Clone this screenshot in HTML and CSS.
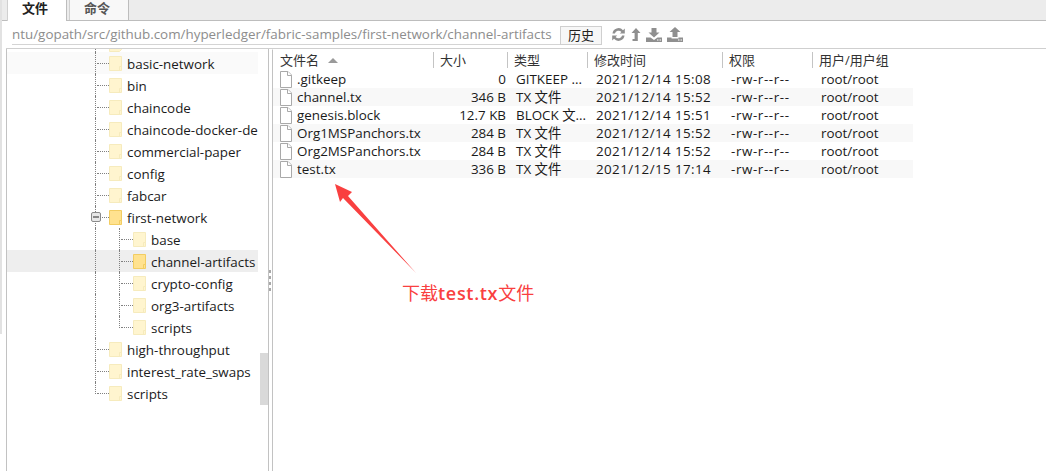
FILE: index.html
```html
<!DOCTYPE html>
<html lang="zh">
<head>
<meta charset="utf-8">
<title>文件</title>
<link rel="stylesheet" href="styles.css">
</head>
<body>
<div class="tabs">
  <div class="tab active">文件</div>
  <div class="tab">命令</div>
</div>
<div class="pathbar">
  <div class="path">ntu/gopath/src/github.com/hyperledger/fabric-samples/first-network/channel-artifacts</div>
  <button class="hist">历史</button>
  <div class="tools">
    <svg class="ico" width="15" height="15" viewBox="0 0 15 15"><path d="M1.5 6.5A6 6 0 0 1 12 3.2L13.8 1.5V6.5H8.8L10.4 4.9A3.8 3.8 0 0 0 3.9 6.5ZM13.5 8.5A6 6 0 0 1 3 11.8L1.2 13.5V8.5H6.2L4.6 10.1A3.8 3.8 0 0 0 11.1 8.5Z"/></svg>
    <svg class="ico" width="10" height="15" viewBox="0 0 10 15"><path d="M5 1L9.5 6H6.8V14H1.5V12H3.6V6H.5Z"/></svg>
    <svg class="ico" width="16" height="15" viewBox="0 0 16 15"><path d="M5.5 1H10.500V5.500H13.500L8 10.500 2.500 5.500H5.500ZM0 10.500H4.500L8 13 11.500 10.500H16V15H0ZM11 12.500V13.500H12.500V12.500ZM13.500 12.500V13.500H15V12.500Z"/></svg>
    <svg class="ico" width="16" height="15" viewBox="0 0 16 15"><path d="M8 0L13.500 5H10.500V10H5.500V5H2.500ZM0 10.500H4.500V11.500H11.500V10.500H16V15H0ZM11 12.500V13.500H12.500V12.500ZM13.500 12.500V13.500H15V12.500Z"/></svg>
  </div>
</div>
<div class="main">
  <div class="tree">
    <div class="tree-list">
      <div class="row clip"><span class="guide"></span><svg class="folder" width="13" height="15" viewBox="0 0 13 15"><path d="M.5.5H12.500V12.500L10.500 14.500H.5Z"/></svg></div>
      <div class="row hover"><span class="guide"></span><svg class="folder" width="13" height="15" viewBox="0 0 13 15"><path d="M.5.5H12.500V14.500H.5Z"/><path d="M10.500 14.500V10.500H12.500"/></svg><span class="name">basic-network</span></div>
      <div class="row"><span class="guide"></span><svg class="folder" width="13" height="15" viewBox="0 0 13 15"><path d="M.5.5H12.500V14.500H.5Z"/><path d="M10.500 14.500V10.500H12.500"/></svg><span class="name">bin</span></div>
      <div class="row"><span class="guide"></span><svg class="folder" width="13" height="15" viewBox="0 0 13 15"><path d="M.5.5H12.500V14.500H.5Z"/><path d="M10.500 14.500V10.500H12.500"/></svg><span class="name">chaincode</span></div>
      <div class="row"><span class="guide"></span><svg class="folder" width="13" height="15" viewBox="0 0 13 15"><path d="M.5.5H12.500V14.500H.5Z"/><path d="M10.500 14.500V10.500H12.500"/></svg><span class="name">chaincode-docker-de</span></div>
      <div class="row"><span class="guide"></span><svg class="folder" width="13" height="15" viewBox="0 0 13 15"><path d="M.5.5H12.500V14.500H.5Z"/><path d="M10.500 14.500V10.500H12.500"/></svg><span class="name">commercial-paper</span></div>
      <div class="row"><span class="guide"></span><svg class="folder" width="13" height="15" viewBox="0 0 13 15"><path d="M.5.5H12.500V14.500H.5Z"/><path d="M10.500 14.500V10.500H12.500"/></svg><span class="name">config</span></div>
      <div class="row"><span class="guide"></span><svg class="folder" width="13" height="15" viewBox="0 0 13 15"><path d="M.5.5H12.500V14.500H.5Z"/><path d="M10.500 14.500V10.500H12.500"/></svg><span class="name">fabcar</span></div>
      <div class="row"><span class="guide open"><span class="box"></span></span><svg class="folder on" width="13" height="15" viewBox="0 0 13 15"><path d="M.5.5H12.500V14.500H.5Z"/><path d="M10.500 14.500V10.500H12.500"/></svg><span class="name">first-network</span></div>
      <div class="row"><span class="pass"></span><span class="guide"></span><svg class="folder" width="13" height="15" viewBox="0 0 13 15"><path d="M.5.5H12.500V14.500H.5Z"/><path d="M10.500 14.500V10.500H12.500"/></svg><span class="name">base</span></div>
      <div class="row selected"><span class="pass"></span><span class="guide"></span><svg class="folder on" width="13" height="15" viewBox="0 0 13 15"><path d="M.5.5H12.500V14.500H.5Z"/><path d="M10.500 14.500V10.500H12.500"/></svg><span class="name">channel-artifacts</span></div>
      <div class="row"><span class="pass"></span><span class="guide"></span><svg class="folder" width="13" height="15" viewBox="0 0 13 15"><path d="M.5.5H12.500V14.500H.5Z"/><path d="M10.500 14.500V10.500H12.500"/></svg><span class="name">crypto-config</span></div>
      <div class="row"><span class="pass"></span><span class="guide"></span><svg class="folder" width="13" height="15" viewBox="0 0 13 15"><path d="M.5.5H12.500V14.500H.5Z"/><path d="M10.500 14.500V10.500H12.500"/></svg><span class="name">org3-artifacts</span></div>
      <div class="row"><span class="pass"></span><span class="guide end"></span><svg class="folder" width="13" height="15" viewBox="0 0 13 15"><path d="M.5.5H12.500V14.500H.5Z"/><path d="M10.500 14.500V10.500H12.500"/></svg><span class="name">scripts</span></div>
      <div class="row"><span class="guide"></span><svg class="folder" width="13" height="15" viewBox="0 0 13 15"><path d="M.5.5H12.500V14.500H.5Z"/><path d="M10.500 14.500V10.500H12.500"/></svg><span class="name">high-throughput</span></div>
      <div class="row"><span class="guide"></span><svg class="folder" width="13" height="15" viewBox="0 0 13 15"><path d="M.5.5H12.500V14.500H.5Z"/><path d="M10.500 14.500V10.500H12.500"/></svg><span class="name">interest_rate_swaps</span></div>
      <div class="row"><span class="guide end"></span><svg class="folder" width="13" height="15" viewBox="0 0 13 15"><path d="M.5.5H12.500V14.500H.5Z"/><path d="M10.500 14.500V10.500H12.500"/></svg><span class="name">scripts</span></div>
    </div>
    <div class="track"><div class="thumb"></div></div>
  </div>
  <div class="splitter"><i></i><i></i><i></i><i></i></div>
  <div class="files">
    <div class="thead">
      <div class="th first">文件名<span class="sort"></span></div>
      <div class="th">大小</div>
      <div class="th">类型</div>
      <div class="th">修改时间</div>
      <div class="th">权限</div>
      <div class="th">用户/用户组</div>
    </div>
    <div class="tr"><div class="c-name"><svg class="doc" width="12" height="17" viewBox="0 0 12 17"><path d="M.5.5H8L11.500 4V16.500H.5Z"/><path d="M7.500.5V4.500H11.500"/></svg>.gitkeep</div><div class="c-size">0</div><div class="c">GITKEEP ...</div><div class="c date">2021/12/14 15:08</div><div class="c perm">-rw-r--r--</div><div class="c">root/root</div></div>
    <div class="tr alt"><div class="c-name"><svg class="doc" width="12" height="17" viewBox="0 0 12 17"><path d="M.5.5H8L11.500 4V16.500H.5Z"/><path d="M7.500.5V4.500H11.500"/></svg>channel.tx</div><div class="c-size">346 B</div><div class="c">TX 文件</div><div class="c date">2021/12/14 15:52</div><div class="c perm">-rw-r--r--</div><div class="c">root/root</div></div>
    <div class="tr"><div class="c-name"><svg class="doc" width="12" height="17" viewBox="0 0 12 17"><path d="M.5.5H8L11.500 4V16.500H.5Z"/><path d="M7.500.5V4.500H11.500"/></svg>genesis.block</div><div class="c-size">12.7 KB</div><div class="c">BLOCK 文...</div><div class="c date">2021/12/14 15:51</div><div class="c perm">-rw-r--r--</div><div class="c">root/root</div></div>
    <div class="tr alt"><div class="c-name"><svg class="doc" width="12" height="17" viewBox="0 0 12 17"><path d="M.5.5H8L11.500 4V16.500H.5Z"/><path d="M7.500.5V4.500H11.500"/></svg>Org1MSPanchors.tx</div><div class="c-size">284 B</div><div class="c">TX 文件</div><div class="c date">2021/12/14 15:52</div><div class="c perm">-rw-r--r--</div><div class="c">root/root</div></div>
    <div class="tr"><div class="c-name"><svg class="doc" width="12" height="17" viewBox="0 0 12 17"><path d="M.5.5H8L11.500 4V16.500H.5Z"/><path d="M7.500.5V4.500H11.500"/></svg>Org2MSPanchors.tx</div><div class="c-size">284 B</div><div class="c">TX 文件</div><div class="c date">2021/12/14 15:52</div><div class="c perm">-rw-r--r--</div><div class="c">root/root</div></div>
    <div class="tr alt"><div class="c-name"><svg class="doc" width="12" height="17" viewBox="0 0 12 17"><path d="M.5.5H8L11.500 4V16.500H.5Z"/><path d="M7.500.5V4.500H11.500"/></svg>test.tx</div><div class="c-size">336 B</div><div class="c">TX 文件</div><div class="c date">2021/12/15 17:14</div><div class="c perm">-rw-r--r--</div><div class="c">root/root</div></div>
    <svg class="arrow" width="90" height="96" viewBox="335 182 90 96"><path d="M335 184L352 192 348 196 416 273 343 198 340 202Z"/></svg>
    <div class="note">下载<b>test.tx</b>文件</div>
  </div>
</div>
</body>
</html>
```
FILE: styles.css
```css
* { box-sizing: border-box; }
html, body { margin: 0; height: 471px; overflow: hidden; background: #fff; }
body {
  display: flex;
  flex-direction: column;
  font: 13.4px/18px "Open Sans", "Noto Sans CJK SC", sans-serif;
  color: #1a1a1a;
}
body::before {
  content: "";
  position: absolute;
  left: 0;
  top: 0;
  width: 2px;
  height: 334px;
  background: #e2e2e2;
}
.tabs {
  height: 21px;
  flex: none;
  display: flex;
  gap: 2px;
  padding-left: 7px;
  background: #ececec;
  border-bottom: 1px solid #bdbdbd;
}
.tab {
  width: 60px;
  height: 20px;
  padding-left: 14px;
  background: #f8f8f8;
  border-right: 1px solid #bdbdbd;
  border-left: 1px solid #d0d0d0;
  font-size: 13px;
  font-weight: 700;
  line-height: 16px;
  color: #555;
}
.tab.active { background: #fff; color: #222; height: 21px; }
.pathbar {
  height: 28px;
  flex: none;
  display: flex;
  margin-left: 6px;
  padding: 5px 0 0 6px;
  border-bottom: 1px solid #cfcfcf;
}
.path {
  width: 548px;
  height: 19px;
  line-height: 17px;
  white-space: nowrap;
  overflow: hidden;
  color: #8d8d8d;
  border-bottom: 1px solid #d4d4d4;
}
.hist {
  width: 42px;
  height: 19px;
  margin: 0;
  padding: 0;
  font: 13px/17px "Open Sans", "Noto Sans CJK SC", sans-serif;
  color: #222;
  background: #f7f7f7;
  border: 1px solid #cfcfcf;
}
.tools { display: flex; gap: 5px; margin-left: 9px; padding-top: 1px; align-items: flex-start; }
.ico { fill: #8f8f8f; flex: none; }
.main { flex: 1; display: flex; min-height: 0; }
.tree {
  width: 263px;
  margin-left: 6px;
  display: flex;
  border-left: 1px solid #c2c2c2;
  border-right: 1px solid #c2c2c2;
}
.tree-list { width: 253px; flex: none; }
.track { flex: 1; padding-top: 304px; }
.thumb { height: 52px; background: #d9d9d9; }
.row {
  height: 22px;
  width: 251px;
  display: flex;
  align-items: center;
  padding-left: 88px;
  white-space: nowrap;
  overflow: hidden;
}
.row.clip { height: 3px; align-items: flex-end; }
.row.clip .guide::after { display: none; }
.row.hover { background: #fafafa; }
.row.selected { background: #eee; }
.guide {
  flex: none;
  align-self: stretch;
  width: 14px;
  border-left: 1px dotted #808080;
  display: flex;
  align-items: center;
}
.guide::after {
  content: "";
  width: 12px;
  border-top: 1px dotted #808080;
  margin-left: 1px;
}
.guide.end { height: 12px; align-self: flex-start; align-items: flex-end; }
.pass { flex: none; align-self: stretch; width: 24px; border-left: 1px dotted #808080; }
.guide.open { position: relative; }
.box {
  position: absolute;
  left: -5px;
  top: 6px;
  width: 10px;
  height: 10px;
  background: linear-gradient(#888, #888) center / 6px 2px no-repeat, #e8e8e8;
  border: 1px solid #8a8a8a;
  border-radius: 2px;
}
.folder { flex: none; fill: #fff5cf; stroke: #f6ebbd; }
.folder.on { fill: #ffe28f; stroke: #f2cd62; }
.name { margin-left: 5px; padding-top: 1px; color: #1b1b1b; }
.splitter {
  width: 3px;
  flex: none;
  display: flex;
  flex-direction: column;
  gap: 3px;
  padding: 221px 1px 0 0;
}
.splitter i { display: block; width: 2px; height: 3px; background: #a8a8a8; }
.files {
  flex: 1;
  position: relative;
  border-left: 1px solid #c2c2c2;
  border-top: 1px solid transparent;
}
.thead, .tr {
  display: grid;
  grid-template-columns: 160px 74px 80px 135px 90px 101px;
  width: 640px;
}
.thead { height: 19px; padding-top: 2px; margin-bottom: 1px; }
.tr { height: 18px; }
.tr.alt { background: #f8f8f8; }
.th { border-left: 1px solid #c4c4c4; height: 16px; padding-left: 6px; font-size: 13px; line-height: 16px; color: #333; }
.th.first { border: 0; padding-left: 7px; display: flex; }
.sort {
  width: 0;
  height: 0;
  margin: 6px 0 0 9px;
  border: 5px solid transparent;
  border-top: 0;
  border-bottom: 5px solid #9a9a9a;
}
.c-name { display: flex; align-items: center; padding-left: 7px; white-space: nowrap; overflow: hidden; }
.doc { flex: none; fill: #fff; stroke: #a9a9a9; margin-right: 5px; }
.c-size { text-align: right; padding-right: 1px; }
.c { padding-left: 9px; white-space: nowrap; overflow: hidden; }
.date { letter-spacing: .4px; }
.perm { letter-spacing: .6px; }
.arrow { position: absolute; left: 62px; top: 132px; fill: #f94040; }
.note {
  position: absolute;
  left: 129px;
  top: 231px;
  font-size: 18px;
  line-height: 24px;
  color: #f94040;
  white-space: nowrap;
}
.note b { font-weight: 600; letter-spacing: .7px; }
```
